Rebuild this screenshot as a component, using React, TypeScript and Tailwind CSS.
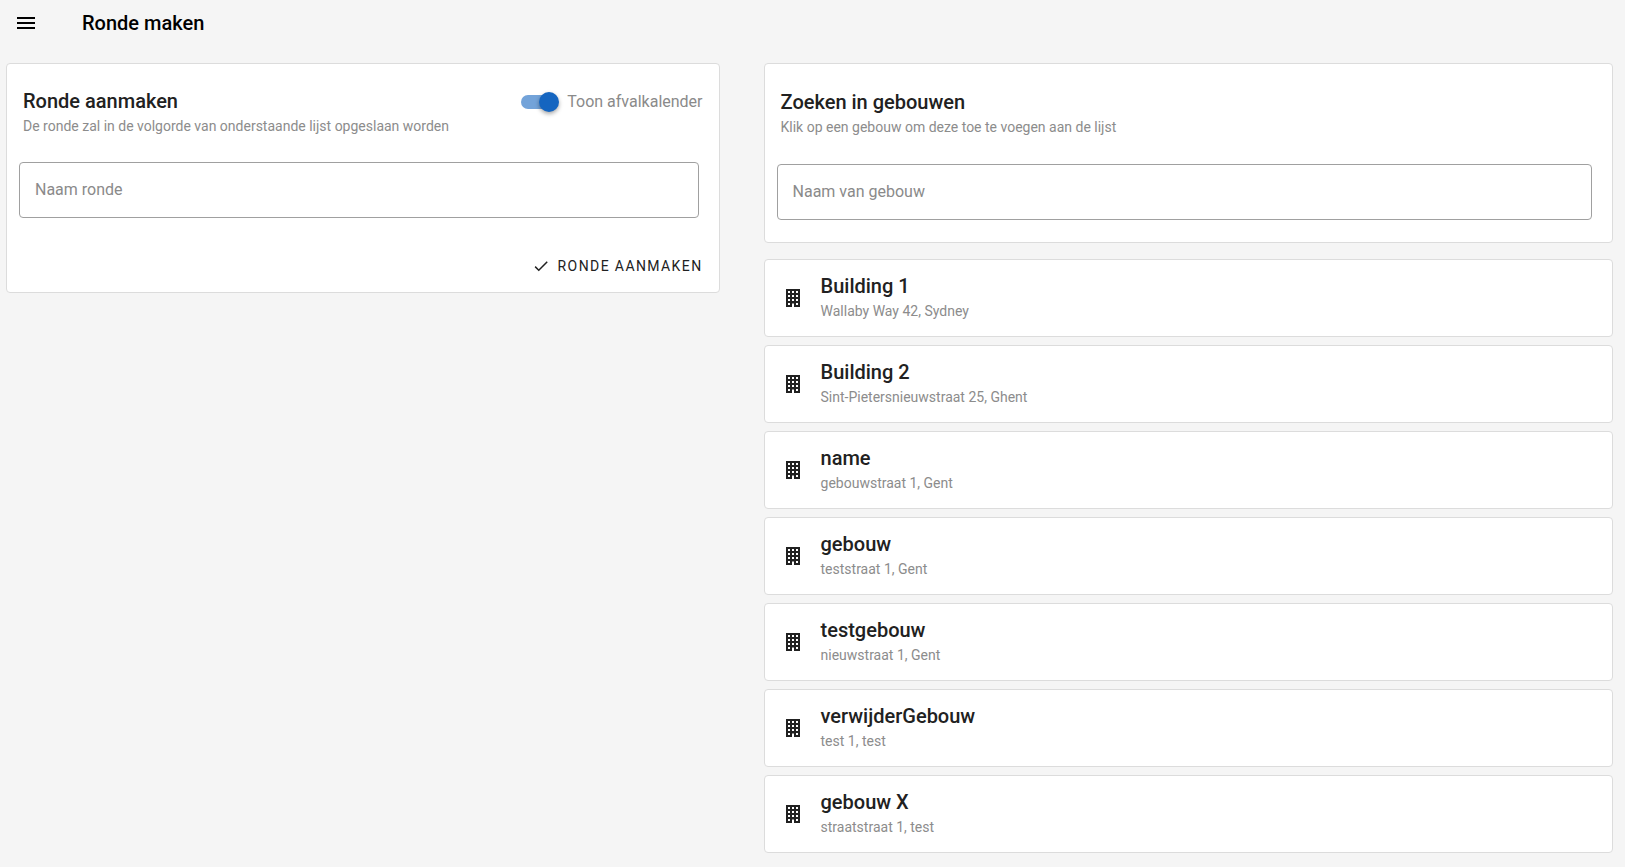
import { useState } from "react";

const buildings = [
  { name: "Building 1", address: "Wallaby Way 42, Sydney" },
  { name: "Building 2", address: "Sint-Pietersnieuwstraat 25, Ghent" },
  { name: "name", address: "gebouwstraat 1, Gent" },
  { name: "gebouw", address: "teststraat 1, Gent" },
  { name: "testgebouw", address: "nieuwstraat 1, Gent" },
  { name: "verwijderGebouw", address: "test 1, test" },
  { name: "gebouw X", address: "straatstraat 1, test" },
];

function MenuIcon() {
  return (
    <svg viewBox="0 0 24 24" className="size-6" fill="currentColor" aria-hidden="true">
      <path d="M3 6h18v2H3V6m0 5h18v2H3v-2m0 5h18v2H3v-2Z" />
    </svg>
  );
}

function CheckIcon() {
  return (
    <svg viewBox="0 0 24 24" className="size-[18px]" fill="currentColor" aria-hidden="true">
      <path d="M21 7 9 19l-5.5-5.5 1.41-1.41L9 16.17 19.59 5.59 21 7Z" />
    </svg>
  );
}

function BuildingIcon() {
  return (
    <svg viewBox="0 0 24 24" className="size-6 shrink-0" fill="currentColor" aria-hidden="true">
      <path d="M5 3v18h6v-3.5h2V21h6V3H5m2 2h2v2H7V5m4 0h2v2h-2V5m4 0h2v2h-2V5M7 9h2v2H7V9m4 0h2v2h-2V9m4 0h2v2h-2V9m-8 4h2v2H7v-2m4 0h2v2h-2v-2m4 0h2v2h-2v-2m-8 4h2v2H7v-2m8 0h2v2h-2v-2Z" />
    </svg>
  );
}

const card = "rounded border border-[#dcdcdc] bg-white";
const title = "text-xl leading-8 font-medium text-[#212121]";
const subtitle = "text-sm leading-[18px] text-[#8c8c8c]";
const field =
  "block h-14 w-full rounded border border-[#a0a0a0] bg-white px-[15px] pb-0.5 text-base text-[#212121] placeholder:text-[#8a8a8a] placeholder:opacity-100 outline-none focus:border-[#1565c0]";

export default function App() {
  const [showCalendar, setShowCalendar] = useState(true);

  return (
    <div className="min-h-screen bg-[#f5f5f5] font-['Roboto',sans-serif] text-[#212121]">
      <header className="flex h-12 items-center gap-11 px-3.5 pb-0.5 text-black">
        <button type="button" aria-label="Menu">
          <MenuIcon />
        </button>
        <h1 className="text-xl font-medium">Ronde maken</h1>
      </header>

      <main className="grid grid-cols-[21fr_25fr] items-start gap-x-11 pt-[15px] pr-3 pb-3.5 pl-1.5">
        <form className={card} onSubmit={(e) => e.preventDefault()}>
          <div className="flex items-start justify-between px-4 pt-[21px]">
            <div>
              <h2 className={title}>Ronde aanmaken</h2>
              <p className={subtitle}>De ronde zal in de volgorde van onderstaande lijst opgeslaan worden</p>
            </div>
            <label className="flex h-[34px] cursor-pointer items-center gap-2 text-base text-[#8a8a8a]">
              <span className="relative flex h-5 w-[38px] items-center">
                <input
                  type="checkbox"
                  role="switch"
                  checked={showCalendar}
                  onChange={(e) => setShowCalendar(e.target.checked)}
                  className="peer h-3.5 w-9 cursor-pointer appearance-none rounded-full bg-[#bdbdbd] checked:bg-[#73a3d9]"
                />
                <span className="pointer-events-none absolute left-0 size-5 rounded-full bg-white shadow-[0_2px_4px_rgba(0,0,0,0.35)] peer-checked:left-[18px] peer-checked:bg-[#1565c0]" />
              </span>
              Toon afvalkalender
            </label>
          </div>
          <div className="pt-[27px] pr-5 pl-3">
            <input type="text" aria-label="Naam ronde" placeholder="Naam ronde" className={field} />
          </div>
          <div className="flex justify-end px-4 pt-[30px] pb-2">
            <button type="submit" className="flex h-9 items-center gap-2 text-sm tracking-widest uppercase">
              <CheckIcon />
              Ronde aanmaken
            </button>
          </div>
        </form>

        <div>
          <section className={card}>
            <div className="px-4 pt-[22px]">
              <h2 className={title}>Zoeken in gebouwen</h2>
              <p className={subtitle}>Klik op een gebouw om deze toe te voegen aan de lijst</p>
            </div>
            <div className="pt-7 pr-5 pb-[22px] pl-3">
              <input type="search" aria-label="Naam van gebouw" placeholder="Naam van gebouw" className={field} />
            </div>
          </section>

          <ul className="mt-4 flex flex-col gap-2">
            {buildings.map((b) => (
              <li key={b.name}>
                <button type="button" className={`flex w-full items-center gap-4 px-4 py-2.5 text-left ${card}`}>
                  <BuildingIcon />
                  <span className="flex flex-col pb-1.5">
                    <span className={title}>{b.name}</span>
                    <span className={subtitle}>{b.address}</span>
                  </span>
                </button>
              </li>
            ))}
          </ul>
        </div>
      </main>
    </div>
  );
}
